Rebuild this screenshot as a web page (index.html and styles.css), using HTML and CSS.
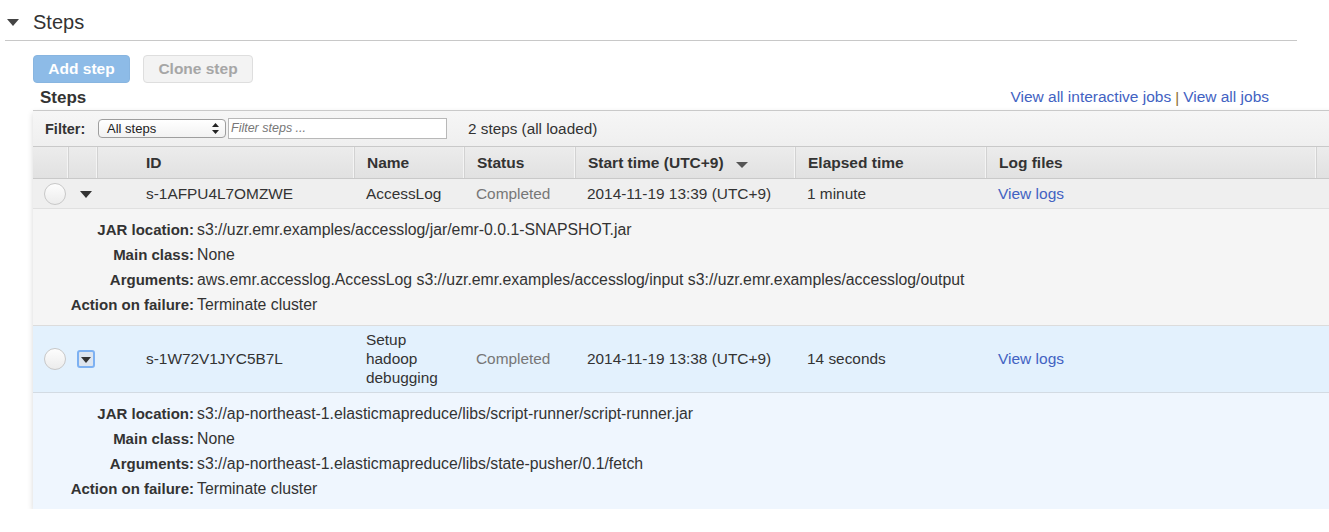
FILE: index.html
```html
<!DOCTYPE html>
<html>
<head>
<meta charset="utf-8">
<link rel="stylesheet" href="styles.css">
</head>
<body>
<div class="section-head">
  <span class="caret-big"></span>
  <h1 class="title">Steps</h1>
</div>
<div class="content">
  <div class="toolbar">
    <button class="btn btn-primary">Add step</button>
    <button class="btn btn-default">Clone step</button>
  </div>
  <div class="subhead">
    <h2 class="subtitle">Steps</h2>
    <div class="links"><a class="link">View all interactive jobs</a><span class="sep">|</span><a class="link">View all jobs</a></div>
  </div>
  <div class="table">
    <div class="filterbar">
      <span class="filter-label">Filter:</span>
      <div class="select"><span>All steps</span><svg class="updown" width="7" height="11" viewBox="0 0 7 11"><path d="M3.5 0 L7 4 L0 4 Z M0 7 L7 7 L3.5 11 Z" fill="#222"/></svg></div>
      <div class="search">Filter steps ...</div>
      <span class="count">2 steps (all loaded)</span>
    </div>
    <div class="grid head">
      <div class="hc"></div>
      <div class="hc"></div>
      <div class="hc id">ID</div>
      <div class="hc">Name</div>
      <div class="hc">Status</div>
      <div class="hc">Start time (UTC+9) <span class="sort"></span></div>
      <div class="hc">Elapsed time</div>
      <div class="hc">Log files</div>
      <div class="hc last"></div>
    </div>
    <div class="grid row row-gray">
      <div class="c"><span class="radio"></span></div>
      <div class="c"><span class="tri"></span></div>
      <div class="c id">s-1AFPU4L7OMZWE</div>
      <div class="c">AccessLog</div>
      <div class="c muted">Completed</div>
      <div class="c">2014-11-19 13:39 (UTC+9)</div>
      <div class="c">1 minute</div>
      <div class="c"><a class="link">View logs</a></div>
      <div class="c"></div>
    </div>
    <div class="details details-gray">
      <div class="dl">JAR location:</div><div class="dv">s3://uzr.emr.examples/accesslog/jar/emr-0.0.1-SNAPSHOT.jar</div>
      <div class="dl">Main class:</div><div class="dv">None</div>
      <div class="dl">Arguments:</div><div class="dv">aws.emr.accesslog.AccessLog s3://uzr.emr.examples/accesslog/input s3://uzr.emr.examples/accesslog/output</div>
      <div class="dl">Action on failure:</div><div class="dv">Terminate cluster</div>
    </div>
    <div class="grid row row-blue">
      <div class="c"><span class="radio"></span></div>
      <div class="c"><span class="tri-box"><span class="tri"></span></span></div>
      <div class="c id">s-1W72V1JYC5B7L</div>
      <div class="c">Setup hadoop debugging</div>
      <div class="c muted">Completed</div>
      <div class="c">2014-11-19 13:38 (UTC+9)</div>
      <div class="c">14 seconds</div>
      <div class="c"><a class="link">View logs</a></div>
      <div class="c"></div>
    </div>
    <div class="details details-blue">
      <div class="dl">JAR location:</div><div class="dv">s3://ap-northeast-1.elasticmapreduce/libs/script-runner/script-runner.jar</div>
      <div class="dl">Main class:</div><div class="dv">None</div>
      <div class="dl">Arguments:</div><div class="dv">s3://ap-northeast-1.elasticmapreduce/libs/state-pusher/0.1/fetch</div>
      <div class="dl">Action on failure:</div><div class="dv">Terminate cluster</div>
    </div>
  </div>
</div>
</body>
</html>
```

FILE: styles.css
```css
html, body {
  margin: 0;
  padding: 0;
  background: #fff;
  overflow: hidden;
}
body {
  font-family: "Liberation Sans", Arial, Helvetica, sans-serif;
  color: #333;
  font-size: 15px;
  width: 1329px;
}
.section-head {
  display: flex;
  align-items: center;
  margin-left: 5px;
  width: 1292px;
  height: 41px;
  padding-top: 3px;
  box-sizing: border-box;
  border-bottom: 1px solid #c8c8c8;
}
.caret-big {
  width: 0;
  height: 0;
  border-left: 6px solid transparent;
  border-right: 6px solid transparent;
  border-top: 7px solid #444;
  margin-left: 2px;
  margin-top: 1px;
}
.title {
  font-size: 20px;
  font-weight: normal;
  margin: 0 0 0 14px;
  line-height: 24px;
}
.content {
  margin-left: 33px;
  width: 1300px;
}
.toolbar {
  display: flex;
  gap: 13px;
  margin-top: 14px;
}
.btn {
  font-family: "Liberation Sans", Arial, sans-serif;
  font-weight: bold;
  font-size: 15.5px;
  height: 28px;
  border-radius: 4px;
  padding: 0;
  box-sizing: border-box;
  white-space: nowrap;
}
.btn-primary {
  background: #8dbbe7;
  border: 1px solid #88b5e0;
  color: #fff;
  width: 97px;
}
.btn-default {
  background: #f3f3f3;
  border: 1px solid #dedede;
  color: #a6a6a6;
  width: 110px;
}
.subhead {
  display: flex;
  align-items: center;
  justify-content: space-between;
  height: 27px;
  padding: 0 64px 0 7px;
}
.subtitle {
  font-size: 17px;
  font-weight: bold;
  margin: 0;
  padding-top: 2px;
}
.links {
  display: flex;
  align-items: center;
  padding-top: 1px;
}
.link {
  color: #4262c2;
  text-decoration: none;
  font-size: 15.5px;
}
.sep {
  color: #8b6a2e;
  margin: 0 4px;
  font-size: 15px;
}
.table {
  width: 1300px;
  box-shadow: 0 3px 6px rgba(0, 0, 0, 0.16);
}
.filterbar {
  display: flex;
  align-items: center;
  height: 35px;
  border-top: 1px solid #c9c9c9;
  border-bottom: 1px solid #c9c9c9;
  background: linear-gradient(#f6f6f6, #efefef);
  padding-left: 12px;
}
.filter-label {
  font-weight: bold;
  font-size: 14.5px;
  width: 53px;
}
.select {
  width: 128px;
  height: 19px;
  box-sizing: border-box;
  border: 1px solid #9e9e9e;
  border-radius: 4px;
  background: linear-gradient(#fff, #f2f2f2);
  display: flex;
  align-items: center;
  justify-content: space-between;
  padding: 0 6px 0 8px;
  font-size: 13px;
  color: #222;
}
.search {
  margin-left: 2px;
  width: 219px;
  height: 21px;
  box-sizing: border-box;
  border: 1px solid #b8b8b8;
  background: #fff;
  font-size: 12.5px;
  font-style: italic;
  color: #777;
  padding-left: 2px;
  line-height: 19px;
}
.count {
  margin-left: 21px;
  font-size: 15.3px;
}
.grid {
  display: grid;
  grid-template-columns: 36px 29px 257px 110px 111px 220px 191px 330px 1fr;
}
.head {
  height: 31px;
  background: linear-gradient(#ececec, #e1e1e1);
  border-bottom: 1px solid #c9c9c9;
}
.hc {
  display: flex;
  align-items: center;
  font-weight: bold;
  font-size: 15.5px;
  padding-left: 12px;
  border-right: 1px solid #d2d2d2;
  box-shadow: inset -1px 0 0 #f4f4f4;
  white-space: nowrap;
}
.hc.id {
  padding-left: 48px;
}
.hc.last {
  border-right: none;
  box-shadow: none;
}
.sort {
  display: inline-block;
  width: 0;
  height: 0;
  border-left: 6px solid transparent;
  border-right: 6px solid transparent;
  border-top: 6px solid #555;
  margin-left: 12px;
  margin-top: 5px;
}
.row {
  grid-auto-rows: minmax(29px, auto);
}
.row .c {
  display: flex;
  align-items: center;
  padding: 4px 11px 5px 11px;
  line-height: 19px;
  font-size: 15.4px;
}
.row .c:nth-child(1) {
  padding: 0 0 0 11px;
}
.row .c:nth-child(2) {
  padding: 0 0 0 10px;
}
.row .c.id {
  padding-left: 48px;
}
.row .c.muted {
  color: #777;
}
.row-gray {
  background: #efefef;
  border-bottom: 1px solid #e0e0e0;
}
.row-blue {
  background: #e3f1fd;
  border-bottom: 1px solid #d3dbe3;
}
.radio {
  width: 20px;
  height: 20px;
  border-radius: 50%;
  border: 1px solid #c8c8c8;
  background: linear-gradient(#fdfdfd, #ececec);
  display: block;
}
.tri {
  display: block;
  width: 0;
  height: 0;
  border-left: 6px solid transparent;
  border-right: 6px solid transparent;
  border-top: 7px solid #333;
  margin-left: 1px;
  margin-top: 2px;
}
.tri-box {
  display: flex;
  align-items: center;
  justify-content: center;
  width: 18px;
  height: 18px;
  box-sizing: border-box;
  border: 2px solid #7db1f2;
  border-radius: 3px;
  background: #dde5ef;
  margin-left: -2px;
}
.tri-box .tri {
  margin: 2px 0 0 0;
  border-left-width: 5px;
  border-right-width: 5px;
  border-top-width: 6px;
}
.details {
  display: grid;
  grid-template-columns: 161px 1fr;
  column-gap: 3px;
  padding: 8px 0 8px 0;
  line-height: 25px;
  font-size: 15px;
}
.details-gray {
  background: #f5f5f5;
  border-bottom: 1px solid #dcdcdc;
}
.details-blue {
  background: #eff6fe;
}
.dl {
  text-align: right;
  font-weight: bold;
}
.dv {
  white-space: nowrap;
  font-size: 15.8px;
}
```
